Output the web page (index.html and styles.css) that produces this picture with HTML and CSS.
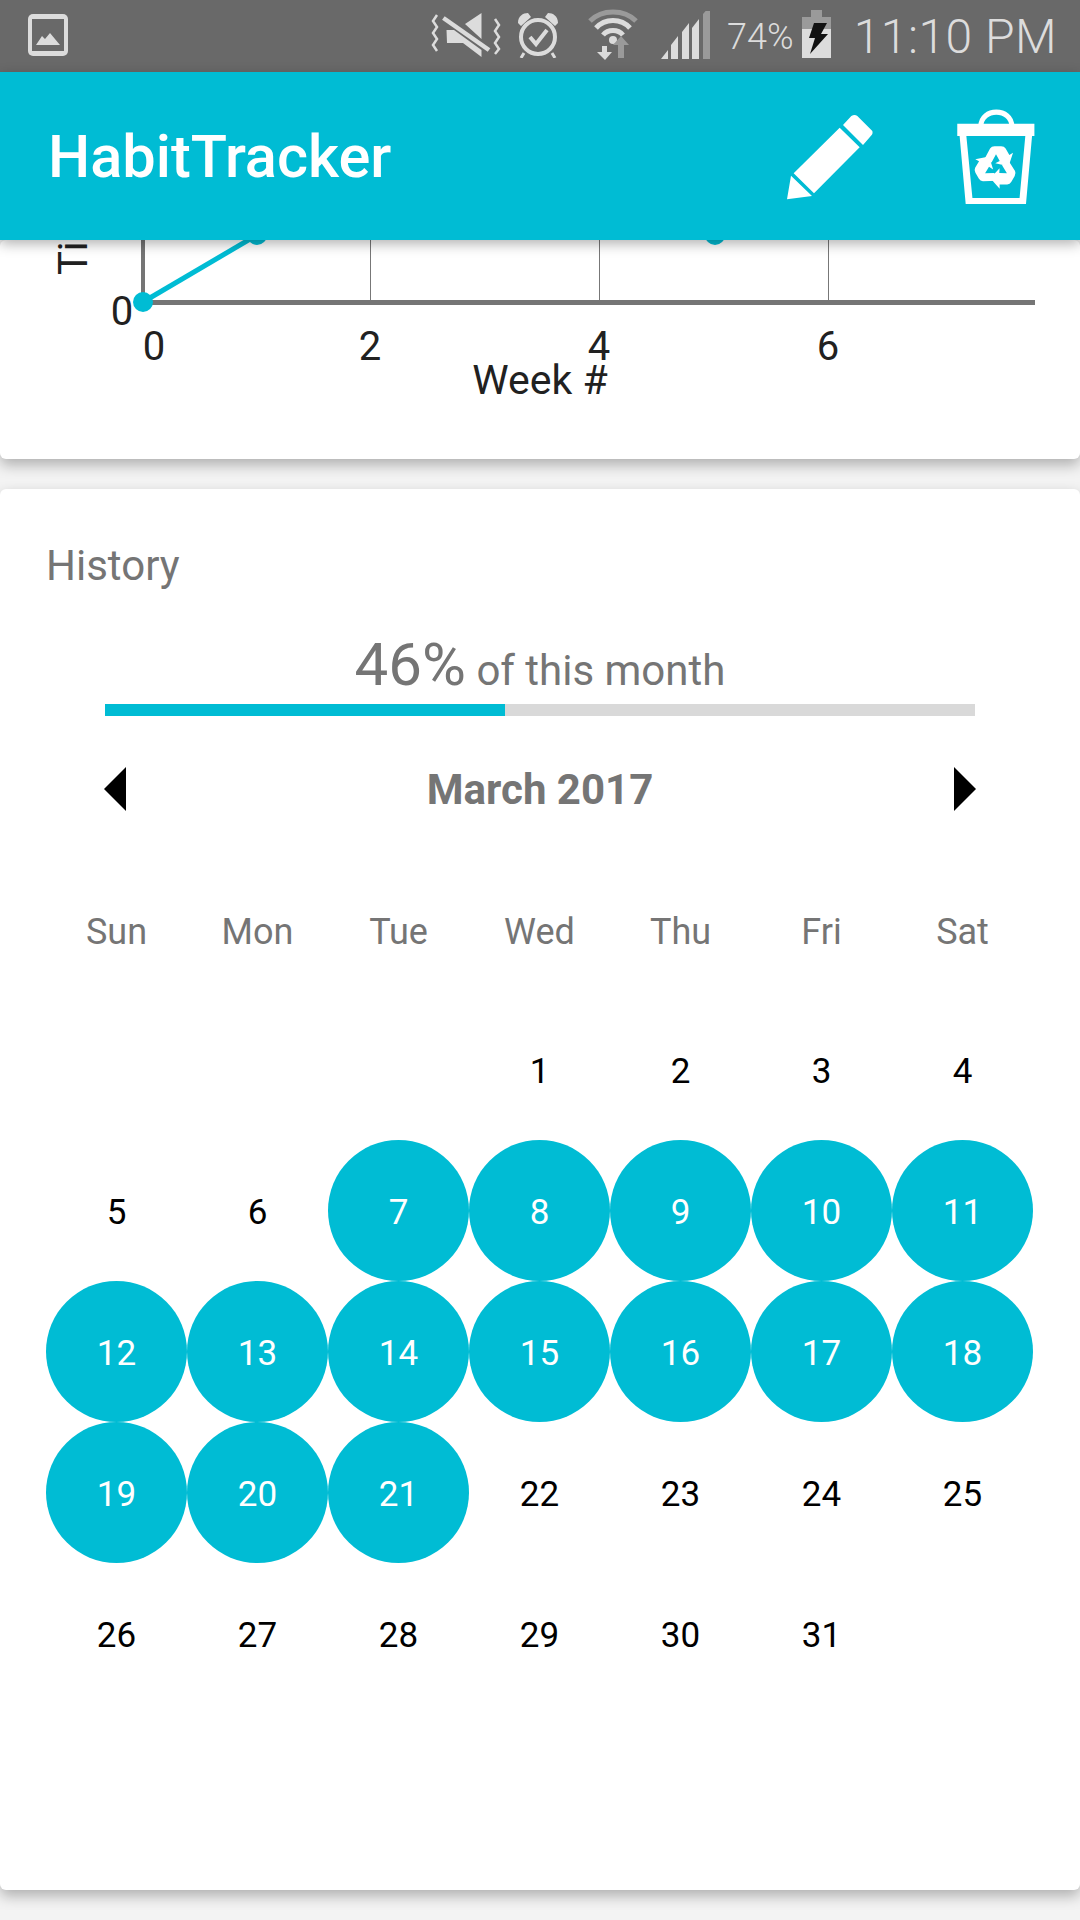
FILE: index.html
```html
<!DOCTYPE html>
<html lang="en">

<head>
  <meta charset="UTF-8">
  <title>HabitTracker</title>
  <link rel="stylesheet" href="styles.css">
</head>

<body>
  <div class="screen">
    <div class="status">
      <svg class="ic-image" width="40" height="42" viewBox="0 0 40 42">
        <rect x="0" y="0" width="40" height="42" rx="5" fill="#dcdcdc"/>
        <rect x="4" y="5" width="32" height="32" fill="#696969"/>
        <path d="M8 31 L14 22 L17 25 L22 19 L32 31 Z" fill="#dcdcdc"/>
      </svg>
      <div class="status-right">
        <svg class="ic-mute" width="70" height="44" viewBox="0 0 70 44">
          <path d="M6 2 L2 8 L6 14 L2 20 L6 26 L2 32 L6 38 M64 6 L68 12 L64 18 L68 24 L64 30 L68 36 L64 41" fill="none" stroke="#dcdcdc" stroke-width="2.5"/>
          <path d="M34 11 L50.5 0 L50.5 26 Z M15.5 17 L16 30 L32 30 L50.5 44 L50.5 37 L23 17 Z" fill="#dcdcdc"/>
          <path d="M12.4 5 L58 37" stroke="#dcdcdc" stroke-width="4.5"/>
        </svg>
        <svg class="ic-alarm" width="44" height="46" viewBox="0 0 44 46">
          <circle cx="22" cy="25" r="17" fill="none" stroke="#dcdcdc" stroke-width="4"/>
          <path d="M2 11 C2 4 7 1 12 1 L15 5 L5 14 Z M42 11 C42 4 37 1 32 1 L29 5 L39 14 Z" fill="#dcdcdc"/>
          <path d="M14 25 L20 32 L31 18" fill="none" stroke="#dcdcdc" stroke-width="4"/>
          <path d="M8 41 L5 46 M36 41 L39 46" stroke="#dcdcdc" stroke-width="3"/>
        </svg>
        <svg class="ic-wifi" width="50" height="52" viewBox="0 0 50 52">
          <path d="M2 13 C14 1 36 1 48 13" fill="none" stroke="#9a9a9a" stroke-width="5"/>
          <path d="M8 20 C17 10 33 10 42 20" fill="none" stroke="#dcdcdc" stroke-width="5"/>
          <path d="M15 27 C20 21 30 21 35 27" fill="none" stroke="#dcdcdc" stroke-width="5"/>
          <circle cx="25" cy="32" r="4" fill="#dcdcdc"/>
          <path d="M14 38 L14 44 L9 44 L17 52 L24 44 L19 44 L19 38 Z" fill="#dcdcdc"/>
          <path d="M30 50 L30 37 L25 37 L33 28 L41 37 L36 37 L36 50 Z" fill="#9a9a9a"/>
        </svg>
        <svg class="ic-signal" width="49" height="48" viewBox="0 0 49 48">
          <path d="M0 48 L7 39 L7 48 Z M10 48 L10 34 L17 25 L17 48 Z M21 48 L21 21 L28 12 L28 48 Z" fill="#dcdcdc"/>
          <path d="M31 48 L31 17 L38 8 L38 48 Z" fill="#dcdcdc"/>
          <path d="M42 48 L42 3 L49 -5 L49 48 Z" fill="#9a9a9a"/>
        </svg>
        <span class="batt-text">74%</span>
        <svg class="ic-batt" width="29" height="48" viewBox="0 0 29 48">
          <rect x="9" y="0" width="11" height="7" fill="#9a9a9a"/>
          <rect x="0" y="7" width="29" height="12" fill="#9a9a9a"/>
          <rect x="0" y="19" width="29" height="29" fill="#dcdcdc"/>
          <path d="M12 13 L25 13 L19 24 L26 24 L8 44 L13 28 L7 28 Z" fill="#111"/>
        </svg>
        <span class="clock">11:10 PM</span>
      </div>
    </div>

    <div class="appbar">
      <span class="title">HabitTracker</span>
      <div class="actions">
        <svg width="86" height="85" viewBox="0 0 258 255">
          <path d="M0 253 L12 182 L75 243 Z M20 175 L158 38 L218 97 L81 235 Z" fill="#fff"/>
          <path d="M168 30 L193 3 Q203 -3 211 3 L256 48 Q258 56 254 60 L228 90 Z" fill="#fff"/>
        </svg>
        <svg width="78" height="96" viewBox="0 0 230 285">
          <path d="M70 52 C70 -5 162 -5 162 52" fill="none" stroke="#fff" stroke-width="15"/>
          <path d="M0 44 H229 V80 H222 L204 282 H25 L7 80 H0 Z M27 80 L45 264 H185 L202 80 Z" fill="#fff" fill-rule="evenodd"/>
          <g transform="translate(115 172) scale(1.1)" fill="#fff">
            <path id="rec" d="M-34 -16 L-16 -50 Q-12 -56 -4 -56 L14 -56 Q22 -56 26 -50 L36 -32 L46 -38 L34 -2 L-2 -10 L10 -16 L0 -34 L-12 -12 Z"/>
            <use href="#rec" transform="rotate(120)"/>
            <use href="#rec" transform="rotate(240)"/>
          </g>
        </svg>
      </div>
    </div>

    <div class="card chart-card">
      <svg class="chart" width="1080" height="219" viewBox="0 0 1080 219">
        <line x1="370.5" y1="0" x2="370.5" y2="62" class="grid"/>
        <line x1="599.5" y1="0" x2="599.5" y2="62" class="grid"/>
        <line x1="828.5" y1="0" x2="828.5" y2="62" class="grid"/>
        <rect x="141" y="0" width="4" height="62" fill="#757575"/>
        <rect x="141" y="60" width="894" height="5" fill="#757575"/>
        <line x1="143" y1="62" x2="257" y2="-5" stroke="#00bcd4" stroke-width="5"/>
        <circle cx="143" cy="62" r="10" fill="#00bcd4"/>
        <circle cx="257" cy="-5" r="10" fill="#00bcd4"/>
        <circle cx="715" cy="-5" r="10" fill="#00bcd4"/>
        <text x="87" y="35" class="axis" transform="rotate(-90 87 35)">Time</text>
        <text x="122" y="85" class="axis mid">0</text>
        <text x="154" y="120" class="axis mid">0</text>
        <text x="370" y="120" class="axis mid">2</text>
        <text x="599" y="120" class="axis mid">4</text>
        <text x="828" y="120" class="axis mid">6</text>
        <text x="540" y="154" class="axis mid week">Week #</text>
      </svg>
    </div>

    <div class="card history-card">
      <div class="history-label">History</div>
      <div class="percent"><span class="percent-num">46%</span> of this month</div>
      <div class="progress"><div class="progress-fill" style="width: 46%"></div></div>
      <div class="month-nav">
        <span class="arrow arrow-left"></span>
        <span class="month-name">March 2017</span>
        <span class="arrow arrow-right"></span>
      </div>
      <div class="weekdays">
        <div>Sun</div><div>Mon</div><div>Tue</div><div>Wed</div><div>Thu</div><div>Fri</div><div>Sat</div>
      </div>
      <div class="days">
        <div></div><div></div><div></div>
        <div>1</div><div>2</div><div>3</div><div>4</div>
        <div>5</div><div>6</div>
        <div class="on">7</div><div class="on">8</div><div class="on">9</div><div class="on">10</div><div class="on">11</div>
        <div class="on">12</div><div class="on">13</div><div class="on">14</div><div class="on">15</div><div class="on">16</div><div class="on">17</div><div class="on">18</div>
        <div class="on">19</div><div class="on">20</div><div class="on">21</div>
        <div>22</div><div>23</div><div>24</div><div>25</div>
        <div>26</div><div>27</div><div>28</div><div>29</div><div>30</div><div>31</div>
      </div>
    </div>
  </div>
</body>

</html>
```

FILE: styles.css
```css
* {
  box-sizing: border-box;
}

body {
  margin: 0;
  background: #f3f3f3;
  font-family: Roboto, "Liberation Sans", sans-serif;
}

.screen {
  width: 1080px;
  height: 1920px;
  overflow: hidden;
  display: flex;
  flex-direction: column;
}

/* status bar */
.status {
  height: 72px;
  flex: none;
  background: #696969;
  display: flex;
  align-items: flex-start;
  justify-content: space-between;
  padding: 14px 23px 0 28px;
  color: #dcdcdc;
}

.status-right {
  display: flex;
  align-items: flex-start;
  margin-top: -6px;
}

.ic-mute { margin-top: 5px; }
.ic-alarm { margin: 4px 0 0 15px; }
.ic-wifi { margin: 0 0 0 28px; }
.ic-signal { margin: 3px 0 0 23px; }
.ic-batt { margin: 2px 0 0 8px; }

.batt-text {
  margin-left: 17px;
  font-size: 36px;
  line-height: 58px;
  font-weight: 300;
}

.clock {
  margin-left: 23px;
  font-size: 48px;
  line-height: 58px;
  font-weight: 300;
  letter-spacing: 0.5px;
}

/* app bar */
.appbar {
  height: 168px;
  flex: none;
  background: #00bcd4;
  display: flex;
  align-items: center;
  justify-content: space-between;
  padding: 2px 45px 0 48px;
  position: relative;
  z-index: 2;
  box-shadow: 0 4px 12px rgba(0, 0, 0, 0.3);
}

.title {
  color: #fff;
  font-size: 59.5px;
  font-weight: 500;
}

.actions {
  display: flex;
  align-items: center;
  gap: 84px;
}

/* cards */
.card {
  flex: none;
  background: #fff;
  border-radius: 6px;
  box-shadow: 0 6px 14px rgba(0, 0, 0, 0.28);
}

.chart-card {
  height: 219px;
  margin-bottom: 30px;
  overflow: hidden;
}

.chart {
  display: block;
}

.grid {
  stroke: #777;
  stroke-width: 1;
}

.axis {
  font-size: 40px;
  fill: #212121;
}

.week {
  font-size: 41px;
}

.mid {
  text-anchor: middle;
}

.history-card {
  height: 1401px;
  padding: 0 46px;
}

.history-label {
  margin-top: 52px;
  font-size: 42px;
  line-height: 50px;
  color: #757575;
}

.percent {
  margin-top: 43px;
  text-align: center;
  font-size: 42px;
  line-height: 62px;
  color: #757575;
}

.percent-num {
  font-size: 60px;
}

.progress {
  margin: 2px 59px 0;
  height: 12px;
  background: #d9d9d9;
}

.progress-fill {
  height: 100%;
  background: #00bcd4;
}

.month-nav {
  margin: 51px 58px 0;
  height: 44px;
  display: flex;
  align-items: center;
  justify-content: space-between;
}

.month-name {
  font-size: 42px;
  font-weight: 700;
  color: #757575;
}

.arrow {
  width: 0;
  height: 0;
  border-top: 22px solid transparent;
  border-bottom: 22px solid transparent;
}

.arrow-left {
  border-right: 22px solid #000;
}

.arrow-right {
  border-left: 22px solid #000;
}

.weekdays,
.days {
  display: grid;
  grid-template-columns: repeat(7, 141px);
  justify-items: center;
  align-items: center;
}

.weekdays {
  margin-top: 91px;
  height: 60px;
  font-size: 36px;
  color: #757575;
}

.days {
  margin-top: 37px;
  grid-auto-rows: 141px;
  font-size: 35px;
  color: #000;
}

.days > div {
  width: 141px;
  height: 141px;
  padding-top: 4px;
  display: flex;
  align-items: center;
  justify-content: center;
}

.days .on {
  background: #00bcd4;
  color: #fff;
  border-radius: 50%;
}
```
